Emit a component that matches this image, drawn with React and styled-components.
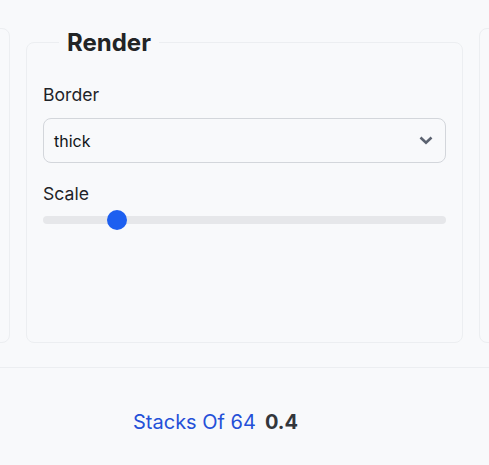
import React from "react";
import styled, { createGlobalStyle } from "styled-components";

const Global = createGlobalStyle`
  html, body { margin: 0; padding: 0; background: #f8f9fb; }
  body { font-family: Inter, "Noto Sans", sans-serif; color: #1f2328; overflow: hidden; }
  * { box-sizing: border-box; }
`;

const Page = styled.div`
  width: 489px;
  height: 465px;
  display: flex;
  flex-direction: column;
  background: #f8f9fb;
`;

const Carousel = styled.div`
  display: flex;
  gap: 16px;
  justify-content: center;
  padding: 28px 0 24px;
  border-bottom: 1px solid #eceef1;
  overflow: hidden;
`;

const Card = styled.fieldset`
  flex: 0 0 437px;
  height: 315px;
  margin: 0;
  padding: 0 16px 16px;
  border: 1px solid #eceef1;
  border-radius: 8px;
  background: #f8f9fb;
  display: flex;
  flex-direction: column;
`;

const Legend = styled.legend`
  margin-left: 16px;
  padding: 0 8px;
  font-size: 24px;
  line-height: 29px;
  font-weight: 700;
  color: #222426;
`;

const Label = styled.div`
  font-size: 17.6px;
  line-height: 26px;
  color: #1f2328;
  margin-top: ${(p) => p.$top}px;
  margin-bottom: ${(p) => p.$bottom}px;
`;

const SelectBox = styled.div`
  height: 45px;
  display: flex;
  align-items: center;
  justify-content: space-between;
  padding: 0 12px 0 10px;
  border: 1px solid #d3d6db;
  border-radius: 8px;
  background: #f8f9fb;
  font-size: 16px;
  color: #111418;
`;

const Track = styled.div`
  position: relative;
  height: 8px;
  border-radius: 4px;
  background: #e6e7ea;
`;

const Thumb = styled.div`
  position: absolute;
  top: 50%;
  width: 20px;
  height: 20px;
  margin: -10px 0 0 -10px;
  border-radius: 50%;
  background: #1d5ff0;
`;

const Footer = styled.div`
  flex: 1;
  display: flex;
  align-items: center;
  gap: 9px;
  padding: 11px 0 0 133px;
`;

const ResultName = styled.span`
  font-size: 20px;
  color: #2450d8;
`;

const ResultValue = styled.span`
  font-size: 20px;
  font-weight: 700;
  color: #33363b;
`;

const Chevron = () => (
  <svg width="14" height="9" viewBox="0 0 14 9" fill="none">
    <polyline points="1.5,1.5 7,6.8 12.5,1.5" stroke="#5b6270" strokeWidth="2.6" strokeLinecap="butt" strokeLinejoin="miter" />
  </svg>
);

export default function App() {
  const value = 0.4;
  const min = 0.1;
  const max = 1.9;
  const frac = (value - min) / (max - min);
  return (
    <Page>
      <Global />
      <Carousel>
        <Card aria-hidden="true" />
        <Card>
          <Legend>Render</Legend>
          <Label $top={25} $bottom={10}>Border</Label>
          <SelectBox>
            <span>thick</span>
            <Chevron />
          </SelectBox>
          <Label $top={18} $bottom={9}>Scale</Label>
          <Track>
            <Thumb style={{ left: `calc(10px + ${frac} * (100% - 20px))` }} />
          </Track>
        </Card>
        <Card aria-hidden="true" />
      </Carousel>
      <Footer>
        <ResultName>Stacks Of 64</ResultName>
        <ResultValue>0.4</ResultValue>
      </Footer>
    </Page>
  );
}
